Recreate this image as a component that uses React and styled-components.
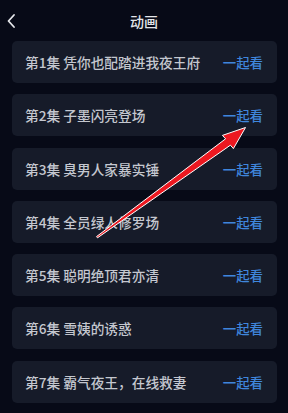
import styled, { createGlobalStyle } from "styled-components";

const GlobalStyle = createGlobalStyle`
  html, body {
    margin: 0;
    padding: 0;
    background: #070a17;
  }
  body {
    font-family: "Noto Sans CJK SC", "Noto Sans", sans-serif;
  }
`;

const episodes = [
  "第1集 凭你也配踏进我夜王府",
  "第2集 子墨闪亮登场",
  "第3集 臭男人家暴实锤",
  "第4集 全员绿人修罗场",
  "第5集 聪明绝顶君亦清",
  "第6集 雪姨的诱惑",
  "第7集 霸气夜王，在线救妻",
];

const Page = styled.div`
  position: relative;
  width: 288px;
  height: 413px;
  overflow: hidden;
  background: #070a17;
`;

const Header = styled.header`
  height: 41px;
  display: flex;
  align-items: center;
  justify-content: center;
  position: relative;
`;

const Title = styled.h1`
  margin: 0;
  font-size: 14px;
  font-weight: 500;
  color: #e4e6ea;
`;

const Back = styled.button`
  position: absolute;
  left: 4px;
  top: 12px;
  width: 14px;
  height: 18px;
  padding: 0;
  border: none;
  background: none;
  display: flex;
  align-items: center;
  justify-content: center;
`;

const List = styled.ul`
  list-style: none;
  margin: 0;
  padding: 0 11px 0 12px;
  display: flex;
  flex-direction: column;
  gap: 11.3px;
`;

const Item = styled.li`
  height: 42px;
  border-radius: 5px;
  background: #161b29;
  display: flex;
  align-items: center;
  justify-content: space-between;
  padding: 0 14px 0 13px;
`;

const Name = styled.span`
  font-size: 13.7px;
  font-weight: 500;
  color: #c4c7cf;
`;

const Watch = styled.span`
  font-size: 13.4px;
  font-weight: 500;
  color: #3f86dc;
`;

const Arrow = styled.svg`
  position: absolute;
  left: 0;
  top: 0;
  pointer-events: none;
`;

export default function App() {
  return (
    <Page>
      <GlobalStyle />
      <Header>
        <Back aria-label="back">
          <svg width="10" height="16" viewBox="0 0 10 16">
            <path d="M8 2 L2.5 8 L8 14" fill="none" stroke="#e6e8ec" strokeWidth="1.8" strokeLinecap="round" strokeLinejoin="round" />
          </svg>
        </Back>
        <Title>动画</Title>
      </Header>
      <List>
        {episodes.map((e) => (
          <Item key={e}>
            <Name>{e}</Name>
            <Watch>一起看</Watch>
          </Item>
        ))}
      </List>
      <Arrow width="288" height="413" viewBox="0 0 288 413">
        <polygon
          points="96.5,236.6 225.6,138.8 222.4,135.4 245.5,127.5 233.4,148.6 230.4,145.2 97.5,237.8"
          fill="#ec1820"
          stroke="#ffffff"
          strokeWidth="1"
          strokeLinejoin="round"
        />
      </Arrow>
    </Page>
  );
}
